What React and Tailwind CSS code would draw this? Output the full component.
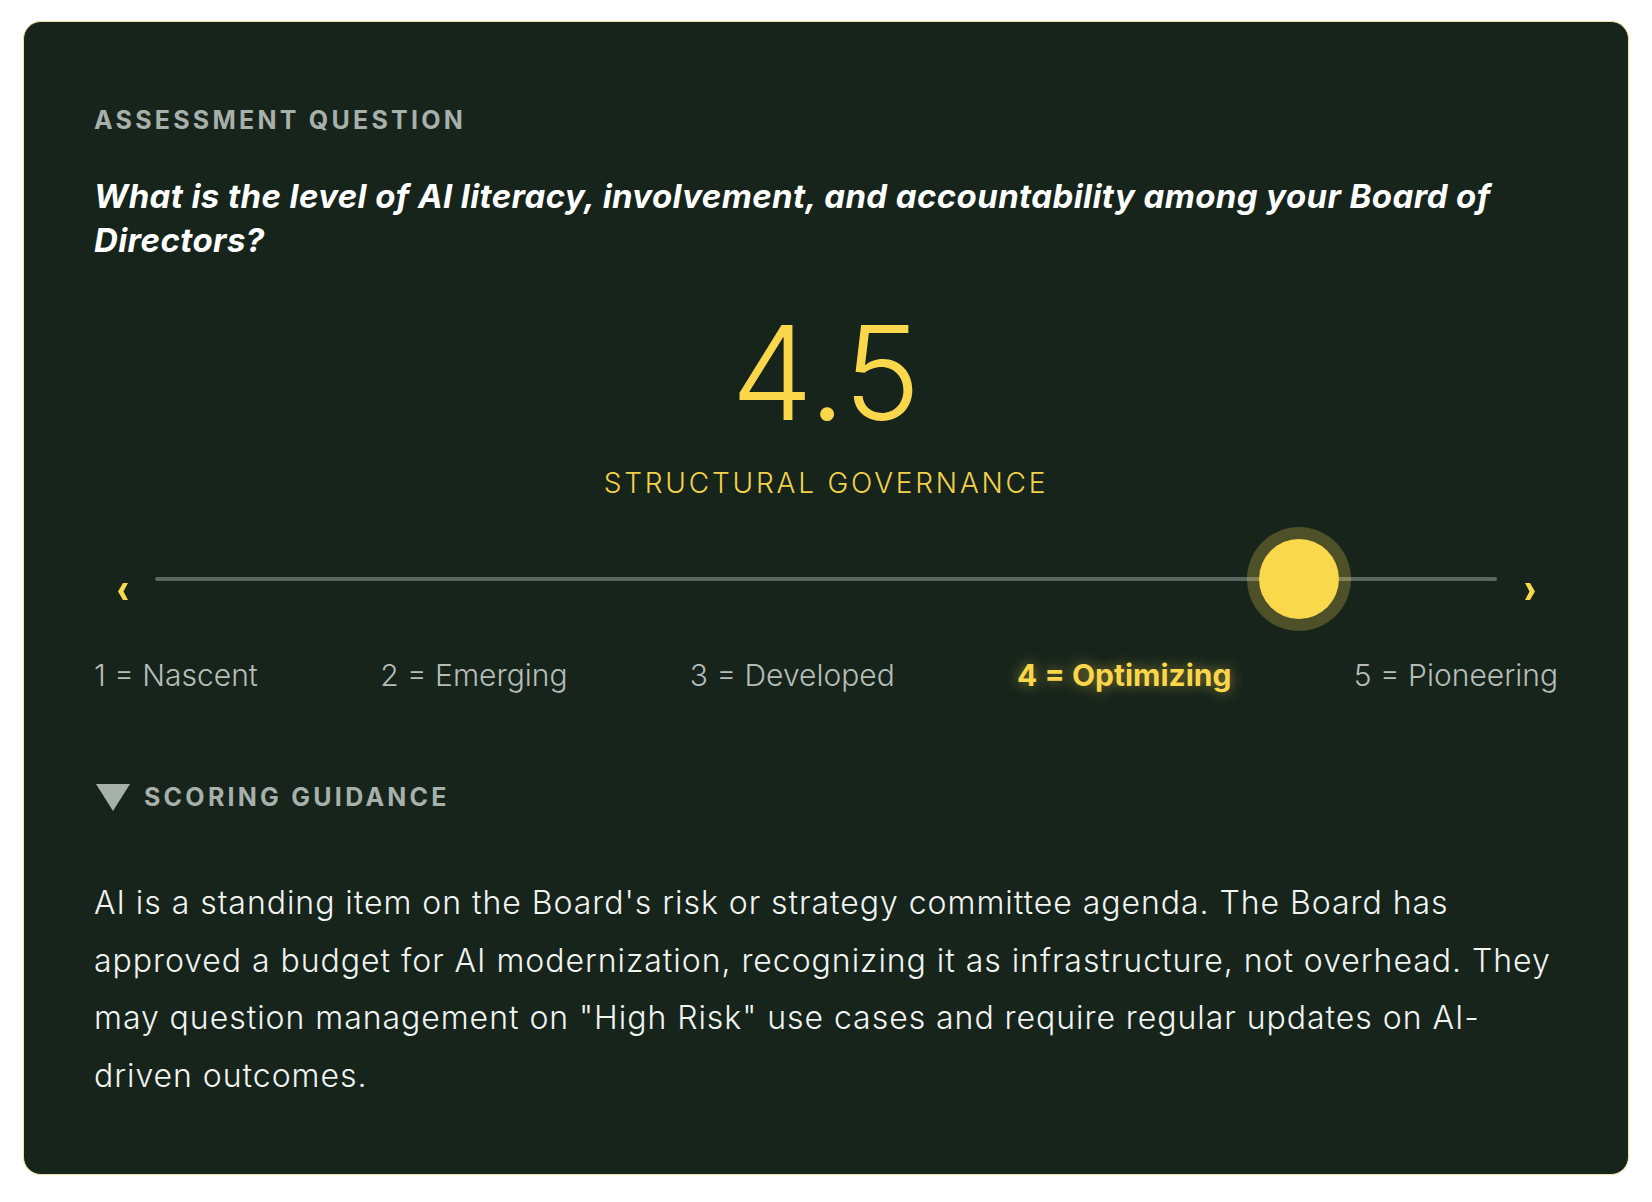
import React, { useState } from 'react';

const levels = [
  { n: 1, label: 'Nascent' },
  { n: 2, label: 'Emerging' },
  { n: 3, label: 'Developed' },
  { n: 4, label: 'Optimizing' },
  { n: 5, label: 'Pioneering' },
];

const ChevronLeft = () => (
  <svg width="11" height="17" viewBox="0 0 11 17" className="block">
    <path d="M6 0 H11 L6.5 8.5 L11 17 H6 L1 8.5 Z" fill="#f9d84b" />
  </svg>
);

const ChevronRight = () => (
  <svg width="11" height="17" viewBox="0 0 11 17" className="block">
    <path d="M5 0 H0 L4.5 8.5 L0 17 H5 L10 8.5 Z" fill="#f9d84b" />
  </svg>
);

const App = () => {
  const [value] = useState(4.5); // current score
  const pct = (value - 1) / 4;
  const active = Math.floor(value);

  return (
    <div className="min-h-screen bg-white px-[23px] pt-[21px] pb-[27px] font-['Inter',sans-serif]">
      <div className="rounded-[18px] border border-[#eee3a2] bg-[#16241c] px-[70px] pt-[80px] pb-[70px]">
        {/* Question header */}
        <p className="text-[25px] leading-[36px] font-bold tracking-[0.13em] text-[#a7b0aa]">
          ASSESSMENT QUESTION
        </p>
        <h2 className="mt-[36px] text-[33px] leading-[44px] font-bold italic tracking-[0.012em] text-white">
          What is the level of AI literacy, involvement, and accountability among your Board of Directors?
        </h2>

        {/* Score */}
        <div className="mt-[46px] text-center text-[130px] leading-none font-light text-[#fad64b]">
          {value.toFixed(1)}
        </div>
        <div className="mt-[27px] text-center text-[28px] leading-[36px] font-light tracking-[0.1em] text-[#f3d24a]">
          STRUCTURAL GOVERNANCE
        </div>

        {/* Slider */}
        <div className="mt-[26px] flex h-[104px] items-center">
          <button className="mt-6 flex w-[56px] justify-center">
            <ChevronLeft />
          </button>
          <div className="relative mx-[5px] h-[4px] flex-1 rounded-full bg-[#5c6660]">
            <div
              className="absolute top-1/2 h-[80px] w-[80px] -translate-x-1/2 -translate-y-1/2 rounded-full bg-[#f9d84b] shadow-[0_0_0_12px_rgba(249,216,75,0.25)]"
              style={{ left: `calc(40px + ${pct} * (100% - 80px))` }}
            />
          </div>
          <button className="mt-6 flex w-[56px] justify-center">
            <ChevronRight />
          </button>
        </div>

        {/* Scale labels */}
        <div className="mt-[24px] flex justify-between text-[30px] leading-[40px]">
          {levels.map((l) =>
            l.n === active ? (
              <span
                key={l.n}
                className="font-bold text-[#fad64b] [text-shadow:0_0_14px_rgba(250,214,75,0.55)]"
              >
                {l.n} = {l.label}
              </span>
            ) : (
              <span key={l.n} className="font-light text-[#b6bdb8]">
                {l.n} = {l.label}
              </span>
            )
          )}
        </div>

        {/* Scoring guidance */}
        <div className="mt-[84px] flex items-center gap-[14px]">
          <svg width="34" height="27" viewBox="0 0 34 27" className="ml-[2px] block">
            <path d="M0 0 H34 L17 27 Z" fill="#a7b0aa" />
          </svg>
          <span className="text-[25px] leading-[36px] font-bold tracking-[0.13em] text-[#a7b0aa]">
            SCORING GUIDANCE
          </span>
        </div>
        <p className="mt-[59px] text-[32px] leading-[57.6px] font-light tracking-[0.03em] text-[#f1f4f1]">
          AI is a standing item on the Board's risk or strategy committee agenda. The Board has
          approved a budget for AI modernization, recognizing it as infrastructure, not overhead.
          They may question management on "High Risk" use cases and require regular updates on
          AI-driven outcomes.
        </p>
      </div>
    </div>
  );
};

export default App;
